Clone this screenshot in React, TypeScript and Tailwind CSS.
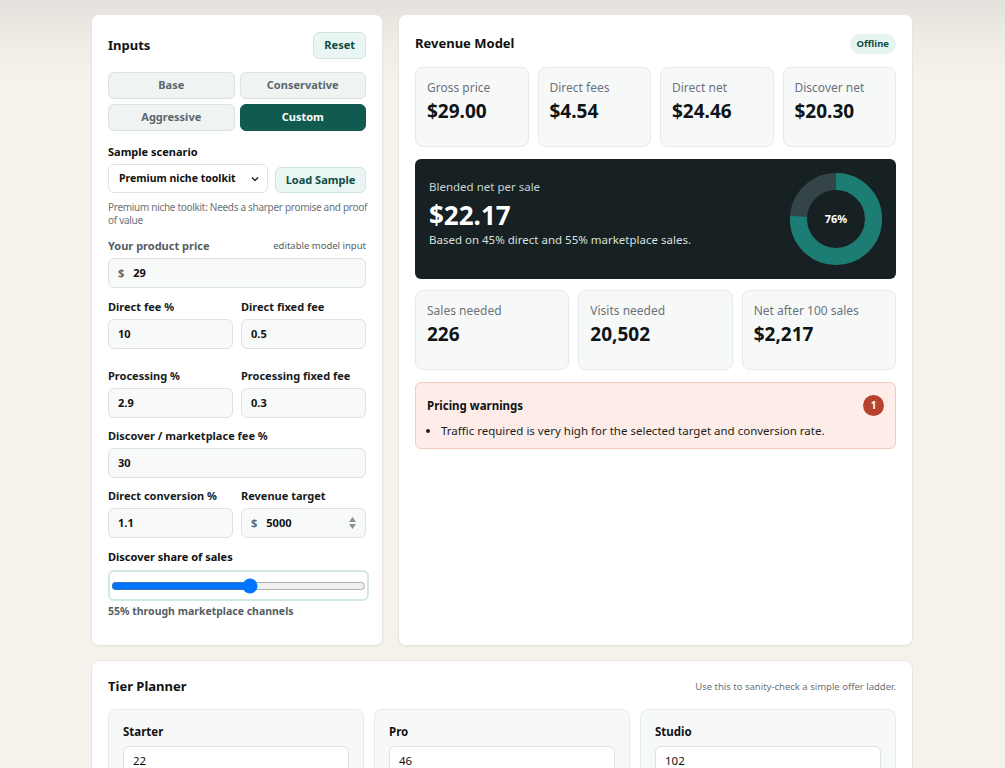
import { useState } from 'react';

const presets = ['Base', 'Conservative', 'Aggressive', 'Custom'];

function Field({ label, value, prefix, spinner }: { label: string; value: string; prefix?: string; spinner?: boolean }) {
  return (
    <div className="flex flex-col gap-[5px]">
      <span className="text-[11px] font-bold leading-[14px] text-[#161b1d]">{label}</span>
      <div className="flex h-[30px] items-center rounded-md border border-[#dde2e2] bg-[#f8f9f9] px-[9px] text-[11px] font-bold text-[#111]">
        {prefix && <span className="mr-[9px] text-[#5f676d]">{prefix}</span>}
        <span className="flex-1">{value}</span>
        {spinner && (
          <span className="flex flex-col items-center gap-[2px] text-[#8a9095]">
            <svg width="7" height="5" viewBox="0 0 7 5"><path d="M3.5 0L7 5H0z" fill="currentColor" /></svg>
            <svg width="7" height="5" viewBox="0 0 7 5"><path d="M0 0h7L3.5 5z" fill="currentColor" /></svg>
          </span>
        )}
      </div>
    </div>
  );
}

function Stat({ label, value }: { label: string; value: string }) {
  return (
    <div className="h-[80px] rounded-lg border border-[#e5eaea] bg-[#f7f9f9] px-[11px] pt-[12px]">
      <div className="text-[12px] leading-[16px] text-[#6b7278]">{label}</div>
      <div className="mt-[3px] text-[19px] font-bold leading-[24px] text-[#0f1416]">{value}</div>
    </div>
  );
}

function Donut({ pct }: { pct: number }) {
  const r = 37.5;
  const c = 2 * Math.PI * r;
  return (
    <div className="relative h-[92px] w-[92px] self-center">
      <svg width="92" height="92" viewBox="0 0 92 92" className="-rotate-90">
        <circle cx="46" cy="46" r={r} fill="none" stroke="#344447" strokeWidth="17" />
        <circle
          cx="46"
          cy="46"
          r={r}
          fill="none"
          stroke="#1b7d73"
          strokeWidth="17"
          strokeDasharray={`${(c * pct) / 100} ${c}`}
        />
      </svg>
      <div className="absolute inset-0 flex items-center justify-center text-[11px] font-bold text-white">{pct}%</div>
    </div>
  );
}

export default function App() {
  const [preset, setPreset] = useState('Custom');

  return (
    <div
      className="min-h-screen bg-[linear-gradient(180deg,#e3e1db_0px,#efece6_40px,#f5f2eb_80px)] pt-[14px] pb-10 text-[#111]"
      style={{ fontFamily: '"Noto Sans", "Open Sans", Arial, sans-serif' }}
    >
      <div className="mx-auto w-[823px] pr-[1px]">
        <div className="grid grid-cols-[292px_1fr] gap-[15px]">
          {/* Inputs panel */}
          <section className="h-[632px] rounded-lg border border-[#e8e5df] bg-white px-[16px] pt-[17px] shadow-[0_1px_2px_rgba(0,0,0,0.03)]">
            <div className="flex h-[27px] items-center justify-between">
              <h2 className="text-[13px] font-bold">Inputs</h2>
              <button className="h-[27px] rounded-md border border-[#cfe6e0] bg-[#eaf6f3] px-[10px] text-[11px] font-bold text-[#0f4d44]">
                Reset
              </button>
            </div>

            <div className="mt-[13px] grid grid-cols-2 gap-[5px]">
              {presets.map((p) => (
                <button
                  key={p}
                  onClick={() => setPreset(p)}
                  className={
                    p === preset
                      ? 'h-[27px] rounded-md border border-[#115a50] bg-[#115a50] text-[11px] font-bold text-white'
                      : 'h-[27px] rounded-md border border-[#d9e3e1] bg-[#eff4f3] text-[11px] font-bold text-[#5b6670]'
                  }
                >
                  {p}
                </button>
              ))}
            </div>

            <div className="mt-[14px] text-[11px] font-bold leading-[14px]">Sample scenario</div>
            <div className="mt-[5px] flex items-center gap-[7px]">
              <div className="flex h-[29px] w-[160px] items-center justify-between rounded-md border border-[#dde2e2] bg-white pl-[10px] pr-[8px] text-[10.5px] font-bold">
                <span>Premium niche toolkit</span>
                <svg width="8" height="6" viewBox="0 0 8 6"><path d="M1 1.5l3 3 3-3" fill="none" stroke="#222" strokeWidth="1.4" /></svg>
              </div>
              <button className="mt-[3px] h-[26px] flex-1 rounded-md border border-[#cfe6e0] bg-[#eaf6f3] text-[11px] font-bold text-[#0f4d44]">
                Load Sample
              </button>
            </div>
            <p className="mt-[8px] whitespace-nowrap text-[10px] leading-[13px] tracking-[-0.3px] text-[#6b7278]">
              Premium niche toolkit: Needs a sharper promise and proof
              <br />
              of value
            </p>

            <div className="mt-[12px] flex flex-col gap-[5px]">
              <div className="flex items-center justify-between leading-[14px]">
                <span className="text-[11px] font-bold text-[#555e64]">Your product price</span>
                <span className="text-[9.5px] text-[#555e64]">editable model input</span>
              </div>
              <div className="flex h-[30px] items-center rounded-md border border-[#dde2e2] bg-[#f8f9f9] px-[9px] text-[11px] font-bold">
                <span className="mr-[9px] text-[#5f676d]">$</span>29
              </div>
            </div>

            <div className="mt-[12px] grid grid-cols-2 gap-[8px]">
              <Field label="Direct fee %" value="10" />
              <Field label="Direct fixed fee" value="0.5" />
            </div>
            <div className="mt-[20px] grid grid-cols-2 gap-[8px]">
              <Field label="Processing %" value="2.9" />
              <Field label="Processing fixed fee" value="0.3" />
            </div>
            <div className="mt-[11px]">
              <Field label="Discover / marketplace fee %" value="30" />
            </div>
            <div className="mt-[11px] grid grid-cols-2 gap-[8px]">
              <Field label="Direct conversion %" value="1.1" />
              <Field label="Revenue target" value="5000" prefix="$" spinner />
            </div>

            <div className="mt-[12px] text-[11px] font-bold leading-[14px]">Discover share of sales</div>
            <div className="mt-[6px] mr-[-3px] flex h-[31px] items-center rounded-md border-2 border-[#d3e7e4] px-[1px]">
              <input type="range" min={0} max={100} defaultValue={55} className="w-full accent-[#0075ff]" />
            </div>
            <div className="mt-[3px] text-[10.5px] font-bold text-[#555e64]">55% through marketplace channels</div>
          </section>

          {/* Revenue model panel */}
          <section className="rounded-lg border border-[#e8e5df] bg-white px-[16px] pt-[17px] shadow-[0_1px_2px_rgba(0,0,0,0.03)]">
            <div className="flex h-[24px] items-center justify-between">
              <h2 className="text-[13px] font-bold">Revenue Model</h2>
              <span className="rounded-full bg-[#e5f4f1] px-[7px] py-[3px] text-[9.5px] font-bold text-[#0f4d44]">Offline</span>
            </div>

            <div className="mt-[11px] grid grid-cols-4 gap-[9px]">
              <Stat label="Gross price" value="$29.00" />
              <Stat label="Direct fees" value="$4.54" />
              <Stat label="Direct net" value="$24.46" />
              <Stat label="Discover net" value="$20.30" />
            </div>

            <div className="mt-[12px] flex h-[120px] items-start justify-between rounded-md bg-[#172022] pl-[14px] pr-[14px] pt-[20px]">
              <div>
                <div className="text-[11.5px] leading-[15px] text-[#c6d6d4]">Blended net per sale</div>
                <div className="mt-[4px] text-[26px] font-bold leading-[34px] text-white">$22.17</div>
                <div className="text-[11.5px] leading-[15px] text-[#d6e0df]">Based on 45% direct and 55% marketplace sales.</div>
              </div>
              <div className="-mt-[20px] flex h-[120px] items-center">
                <Donut pct={76} />
              </div>
            </div>

            <div className="mt-[11px] grid grid-cols-3 gap-[9px]">
              <Stat label="Sales needed" value="226" />
              <Stat label="Visits needed" value="20,502" />
              <Stat label="Net after 100 sales" value="$2,217" />
            </div>

            <div className="mt-[12px] h-[67px] rounded-md border border-[#f5c8c0] bg-[#fdece8] px-[11px] pt-[12px]">
              <div className="flex items-center justify-between">
                <span className="text-[11.5px] font-bold">Pricing warnings</span>
                <span className="flex h-[21px] w-[21px] items-center justify-center rounded-full bg-[#b5432f] text-[10px] font-bold text-white">
                  1
                </span>
              </div>
              <ul className="mt-[7px] list-disc pl-[14px] text-[11.5px] leading-[16px] text-[#1a1f21]">
                <li>Traffic required is very high for the selected target and conversion rate.</li>
              </ul>
            </div>
          </section>
        </div>

        {/* Tier planner */}
        <section className="mt-[14px] rounded-lg border border-[#e8e5df] bg-white px-[16px] pt-[16px] pb-[20px]">
          <div className="flex h-[20px] items-center justify-between">
            <h2 className="text-[13px] font-bold">Tier Planner</h2>
            <span className="text-[9.5px] text-[#6b7278]">Use this to sanity-check a simple offer ladder.</span>
          </div>
          <div className="mt-[12px] grid grid-cols-3 gap-[10px]">
            {[
              ['Starter', '22'],
              ['Pro', '46'],
              ['Studio', '102'],
            ].map(([name, price]) => (
              <div key={name} className="rounded-lg border border-[#e5eaea] bg-[#f7f9f9] px-[14px] pt-[15px] pb-[14px]">
                <div className="text-[11.5px] font-bold leading-[14px]">{name}</div>
                <div className="mt-[7px] flex h-[30px] items-center rounded-md border border-[#dde2e2] bg-white px-[9px] text-[11.5px]">
                  {price}
                </div>
              </div>
            ))}
          </div>
        </section>
      </div>
    </div>
  );
}
